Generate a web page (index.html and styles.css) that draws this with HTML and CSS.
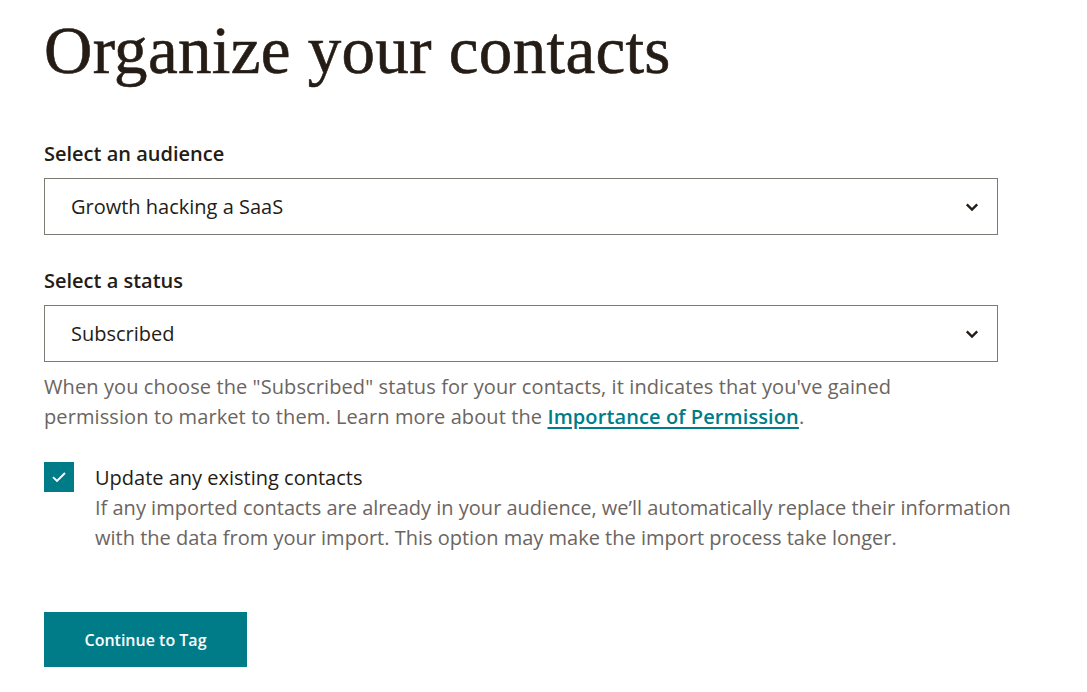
FILE: index.html
```html
<!DOCTYPE html>
<html lang="en">
<head>
<meta charset="utf-8">
<title>Organize your contacts</title>
<link rel="stylesheet" href="styles.css">
</head>
<body>
<main class="page">
  <h1 class="title">Organize your contacts</h1>

  <div class="field">
    <label class="label">Select an audience</label>
    <div class="select">
      <span class="select-value">Growth hacking a SaaS</span>
      <svg class="chevron" width="14" height="10" viewBox="0 0 14 10"><path d="M1.8 2.3 L7 7.5 L12.2 2.3" fill="none" stroke="#241c15" stroke-width="2.4"/></svg>
    </div>
  </div>

  <div class="field">
    <label class="label">Select a status</label>
    <div class="select">
      <span class="select-value">Subscribed</span>
      <svg class="chevron" width="14" height="10" viewBox="0 0 14 10"><path d="M1.8 2.3 L7 7.5 L12.2 2.3" fill="none" stroke="#241c15" stroke-width="2.4"/></svg>
    </div>
    <p class="help">When you choose the "Subscribed" status for your contacts, it indicates that you've gained<br>permission to market to them. Learn more about the <a class="link" href="#">Importance of Permission</a>.</p>
  </div>

  <div class="check-row">
    <span class="checkbox">
      <svg width="16" height="12" viewBox="0 0 16 12"><path d="M2 6.2 L6 10 L14 2" fill="none" stroke="#fff" stroke-width="1.8"/></svg>
    </span>
    <div class="check-text">
      <div class="check-label">Update any existing contacts</div>
      <p class="check-desc">If any imported contacts are already in your audience, we’ll automatically replace their information<br>with the data from your import. This option may make the import process take longer.</p>
    </div>
  </div>

  <button class="btn">Continue to Tag</button>
</main>
</body>
</html>
```

FILE: styles.css
```css
html, body {
  margin: 0;
  padding: 0;
  background: #ffffff;
}

.page {
  padding: 0 0 0 44px;
  font-family: "Open Sans", "Liberation Sans", Arial, sans-serif;
  color: #241c15;
}

.title {
  margin: 0;
  padding-top: 12px;
  font-family: "Liberation Serif", "Times New Roman", serif;
  font-weight: 400;
  font-size: 67px;
  line-height: 76px;
  color: #241c15;
  letter-spacing: 0.3px;
  -webkit-text-stroke: 0.6px #241c15;
}

.field {
  width: 954px;
}

.field:first-of-type {
  margin-top: 54px;
}

.label {
  display: block;
  font-size: 20px;
  line-height: 24px;
  font-weight: 600;
  margin-bottom: 12px;
}

.field + .field {
  margin-top: 34px;
}

.select {
  box-sizing: border-box;
  height: 57px;
  border: 1px solid #7e7a76;
  display: flex;
  align-items: center;
  justify-content: space-between;
  padding: 0 18px 0 26px;
}

.select-value {
  font-size: 20px;
}

.chevron {
  display: block;
}

.help {
  margin: 10px 0 0;
  font-size: 20px;
  line-height: 30px;
  color: #6b6561;
  width: 1000px;
  letter-spacing: 0.1px;
}

.link {
  color: #007c89;
  font-weight: 600;
  text-decoration: underline;
  text-underline-offset: 3px;
}

.check-row {
  display: flex;
  gap: 21px;
  margin-top: 30px;
}

.checkbox {
  flex: none;
  width: 30px;
  height: 30px;
  background: #007c89;
  display: flex;
  align-items: center;
  justify-content: center;
}

.check-text {
  padding-top: 1px;
}

.check-label {
  font-size: 20px;
  line-height: 30px;
  color: #241c15;
}

.check-desc {
  margin: 0;
  font-size: 20px;
  line-height: 30px;
  color: #6b6561;
}

.btn {
  display: block;
  margin-top: 59px;
  width: 203px;
  height: 55px;
  border: none;
  background: #007c89;
  color: #ffffff;
  font-family: "Open Sans", "Liberation Sans", Arial, sans-serif;
  font-weight: 600;
  font-size: 16px;
  padding: 0;
}
```
